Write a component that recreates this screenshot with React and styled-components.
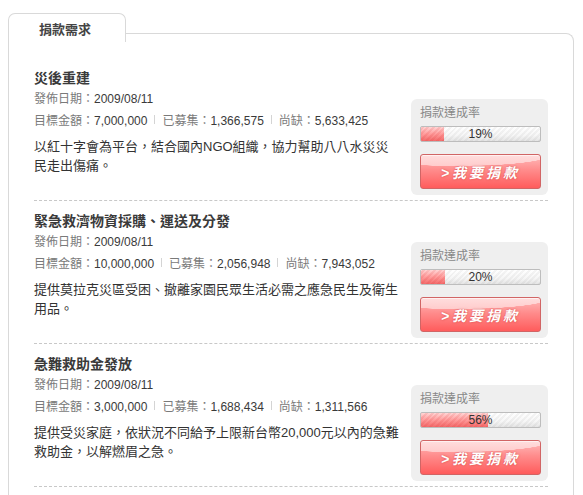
import React from "react";
import styled, { createGlobalStyle } from "styled-components";

const projects = [
	{
		title: "災後重建",
		date: "2009/08/11",
		goal: "7,000,000",
		raised: "1,366,575",
		short: "5,633,425",
		desc: "以紅十字會為平台，結合國內NGO組織，協力幫助八八水災災民走出傷痛。",
		rate: 19,
	},
	{
		title: "緊急救濟物資採購、運送及分發",
		date: "2009/08/11",
		goal: "10,000,000",
		raised: "2,056,948",
		short: "7,943,052",
		desc: "提供莫拉克災區受困、撤離家園民眾生活必需之應急民生及衛生用品。",
		rate: 20,
	},
	{
		title: "急難救助金發放",
		date: "2009/08/11",
		goal: "3,000,000",
		raised: "1,688,434",
		short: "1,311,566",
		desc: "提供受災家庭，依狀況不同給予上限新台幣20,000元以內的急難救助金，以解燃眉之急。",
		rate: 56,
	},
];

const App = () => {
	return (
		<>
			<GlobalStyle />
			<Page>
				<TabBar>
					<Tab>捐款需求</Tab>
					<TabLine />
				</TabBar>
				<Panel>
					{projects.map((p) => (
						<Project key={p.title}>
							<Info>
								<Title>{p.title}</Title>
								<Meta>
									<Label>發佈日期：</Label>
									{p.date}
								</Meta>
								<Meta>
									<Label>目標金額：</Label>
									{p.goal}
									<Sep />
									<Label>已募集：</Label>
									{p.raised}
									<Sep />
									<Label>尚缺：</Label>
									{p.short}
								</Meta>
								<Desc>{p.desc}</Desc>
							</Info>
							<RateBox>
								<RateLabel>捐款達成率</RateLabel>
								<Progress>
									<Fill style={{ width: `${p.rate}%` }} />
									<Percent>{p.rate}%</Percent>
								</Progress>
								<DonateButton>&gt;我要捐款</DonateButton>
							</RateBox>
						</Project>
					))}
				</Panel>
			</Page>
		</>
	);
};

const GlobalStyle = createGlobalStyle`
	body {
		margin: 0;
		background: #fff;
		font-family: "Liberation Sans", "Noto Sans CJK TC", sans-serif;
	}
`;

const Page = styled.div`
	padding: 13px 9px 0 8px;
`;

const TabBar = styled.div`
	display: flex;
	align-items: flex-end;
`;

const Tab = styled.div`
	width: 86px;
	height: 28px;
	padding-left: 30px;
	display: flex;
	align-items: center;
	border: 1px solid #d9d9d9;
	border-bottom: none;
	border-radius: 7px 7px 0 0;
	background: #fff;
	font-size: 13px;
	font-weight: 700;
	color: #444;
`;

const TabLine = styled.div`
	flex: 1;
	height: 8px;
	border-top: 1px solid #d9d9d9;
	border-right: 1px solid #d9d9d9;
	border-top-right-radius: 8px;
`;

const Panel = styled.div`
	border-left: 1px solid #d9d9d9;
	border-right: 1px solid #d9d9d9;
	padding: 16px 25px 0 25px;
	min-height: 460px;
`;

const Project = styled.div`
	display: flex;
	align-items: flex-start;
	justify-content: space-between;
	padding: 10px 0 5px;
	border-bottom: 1px dashed #c8c8c8;
`;

const Info = styled.div`
	width: 366px;
`;

const Title = styled.h3`
	margin: 0;
	font-size: 14px;
	line-height: 20px;
	font-weight: 700;
	color: #3a3a3a;
`;

const Meta = styled.div`
	display: flex;
	align-items: center;
	font-size: 12px;
	line-height: 22px;
	color: #3a3a3a;
`;

const Label = styled.span`
	color: #7a7a7a;
`;

const Sep = styled.span`
	width: 1px;
	height: 9px;
	margin: -3px 7px 0;
	background: #d4d4d4;
`;

const Desc = styled.p`
	margin: 5px 0 0;
	font-size: 13px;
	line-height: 19px;
	color: #333;
`;

const RateBox = styled.div`
	width: 137px;
	height: 96px;
	margin-top: 31px;
	padding: 5px 7px 0 9px;
	box-sizing: border-box;
	border-radius: 6px;
	background: #efefef;
`;

const RateLabel = styled.div`
	font-size: 12px;
	line-height: 18px;
	color: #888;
`;

const Progress = styled.div`
	position: relative;
	height: 16px;
	margin-top: 4px;
	box-sizing: border-box;
	border: 1px solid #bdbdbd;
	border-radius: 2px;
	overflow: hidden;
	background: repeating-linear-gradient(
			-45deg,
			rgba(0, 0, 0, 0.04) 0 2px,
			transparent 2px 4px
		),
		linear-gradient(to bottom, #ffffff, #f6f6f6 60%, #e4e4e4);
`;

const Fill = styled.div`
	height: 100%;
	background: repeating-linear-gradient(
			-45deg,
			rgba(220, 40, 40, 0.12) 0 2px,
			transparent 2px 4px
		),
		linear-gradient(to bottom, #ffd6d6, #ff9c9c 50%, #f26a6a);
`;

const Percent = styled.span`
	position: absolute;
	inset: 0;
	text-align: center;
	font-size: 12px;
	line-height: 14px;
	color: #333;
`;

const DonateButton = styled.button`
	display: block;
	width: 100%;
	height: 35px;
	margin-top: 12px;
	padding: 0;
	border: 1px solid #d16565;
	border-radius: 3px;
	background: radial-gradient(
			ellipse 140% 60% at 30% 0%,
			rgba(255, 255, 255, 0.5) 0 55%,
			transparent 56%
		),
		linear-gradient(to bottom, #ffbcbc, #ff8c8c 45%, #ff5c5c);
	box-shadow: inset 0 1px 0 rgba(255, 255, 255, 0.6);
	font-family: "Liberation Sans", "Noto Sans CJK TC", sans-serif;
	font-size: 14px;
	font-weight: 700;
	font-style: italic;
	letter-spacing: 3px;
	color: #fff;
	text-shadow: 0 0 2px rgba(160, 0, 0, 0.5);
	cursor: pointer;
`;

export default App;
